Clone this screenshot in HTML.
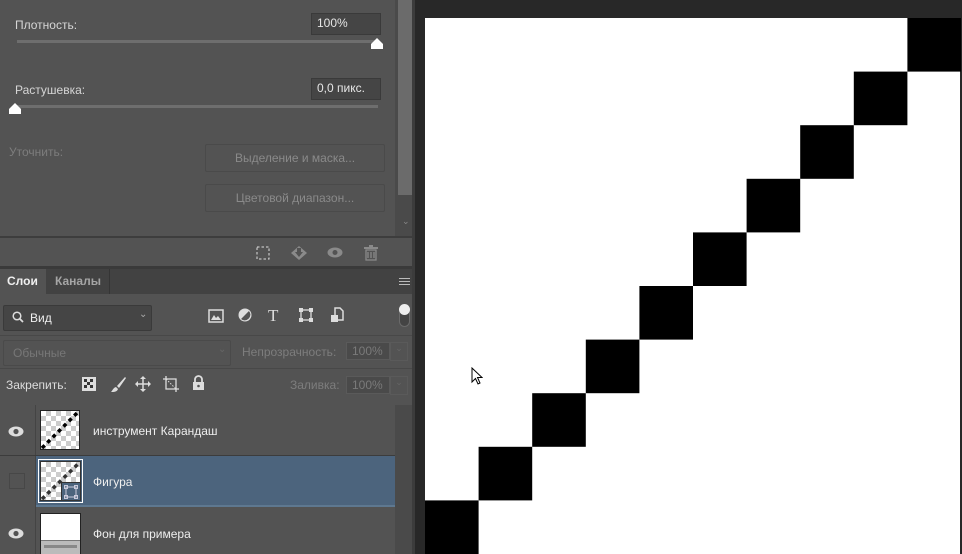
<!DOCTYPE html>
<html><head><meta charset="utf-8"><style>
*{margin:0;padding:0;box-sizing:border-box}
body{width:962px;height:554px;overflow:hidden;background:#282828;position:relative;font-family:"Liberation Sans","DejaVu Sans",sans-serif;font-size:12px;color:#d6d6d6}
.a{position:absolute}
.inp{position:absolute;background:#454545;border:1px solid #3a3a3a;color:#e6e6e6;font-size:12px;padding:2px 5px}
.btn{position:absolute;border:1px solid #4a4a4a;border-radius:2px;color:#8a8a8a;text-align:center;font-size:12px;line-height:27px}
.dis{color:#7d7d7d}
.box{position:absolute;background:#4a4a4a;border:1px solid #5a5a5a;color:#7a7a7a;font-size:12px;padding:1px 5px}
.chk{background-image:linear-gradient(45deg,#ccc 25%,transparent 25%,transparent 75%,#ccc 75%),linear-gradient(45deg,#ccc 25%,transparent 25%,transparent 75%,#ccc 75%);background-size:10px 10px;background-position:0 0,5px 5px;background-color:#fff}
</style></head><body>
<div class="a" style="left:0;top:0;width:415px;height:554px;background:#535353"></div>
<!-- top properties -->
<div class="a" style="left:15px;top:18px">Плотность:</div>
<div class="inp" style="left:311px;top:13px;width:70px;height:22px">100%</div>
<div class="a" style="left:17px;top:40px;width:361px;height:3px;background:#6e6e6e"></div>
<svg class="a" style="left:370px;top:37px" width="14" height="13"><path d="M7 1 L13 7 L13 12 L1 12 L1 7 Z" fill="#fff"/></svg>
<div class="a" style="left:15px;top:83px">Растушевка:</div>
<div class="inp" style="left:311px;top:78px;width:70px;height:22px">0,0 пикс.</div>
<div class="a" style="left:17px;top:105px;width:361px;height:3px;background:#6e6e6e"></div>
<svg class="a" style="left:8px;top:102px" width="14" height="13"><path d="M7 1 L13 7 L13 12 L1 12 L1 7 Z" fill="#fff"/></svg>
<div class="a dis" style="left:9px;top:145px">Уточнить:</div>
<div class="btn" style="left:205px;top:144px;width:180px;height:28px">Выделение и маска...</div>
<div class="btn" style="left:205px;top:184px;width:180px;height:28px">Цветовой диапазон...</div>
<!-- scrollbar -->
<div class="a" style="left:395px;top:0;width:17px;height:236px;background:#4a4a4a"></div>
<div class="a" style="left:398px;top:0;width:14px;height:195px;background:#6b6b6b"></div>
<div class="a" style="left:402px;top:216px;color:#888;font-size:9px">⌄</div>
<div class="a" style="left:412px;top:0;width:3px;height:554px;background:#3c3c3c"></div>
<div class="a" style="left:0;top:236px;width:412px;height:2px;background:#3d3d3d"></div>
<!-- bottom icons -->
<svg class="a" style="left:256px;top:246px" width="14" height="14"><rect x="1" y="1" width="12" height="12" fill="none" stroke="#ddd" stroke-dasharray="2.5 2"/></svg>
<svg class="a" style="left:290px;top:245px" width="18" height="16"><path d="M9 1 L17 8 L9 15 L1 8Z" fill="#8a8a8a"/><path d="M7 3 L11 3 L11 7 L13 7 L9 12 L5 7 L7 7Z" fill="#535353"/></svg>
<svg class="a" style="left:327px;top:247px" width="16" height="11"><ellipse cx="8" cy="5.5" rx="7.5" ry="5" fill="#8a8a8a"/><circle cx="8" cy="5.5" r="2.5" fill="#535353"/></svg>
<svg class="a" style="left:364px;top:245px" width="14" height="16"><rect x="0" y="2" width="14" height="2" fill="#8a8a8a"/><rect x="5" y="0" width="4" height="2" fill="#8a8a8a"/><path d="M2 5 H12 V15 H2Z M4 7 V13 M7 7 V13 M10 7 V13" fill="none" stroke="#8a8a8a" stroke-width="1.3"/></svg>
<div class="a" style="left:0;top:266px;width:412px;height:3px;background:#3a3a3a"></div>
<!-- tabs -->
<div class="a" style="left:0;top:269px;width:412px;height:25px;background:#424242"></div>
<div class="a" style="left:0;top:269px;width:46px;height:25px;background:#535353"></div>
<div class="a" style="left:7px;top:274px;font-weight:bold;color:#f0f0f0;font-size:12px">Слои</div>
<div class="a" style="left:46px;top:269px;width:64px;height:25px;border-right:1px solid #353535"></div>
<div class="a" style="left:55px;top:274px;font-weight:bold;color:#a5a5a5;font-size:12px">Каналы</div>
<div class="a" style="left:399px;top:278px;width:11px;height:7px;border-top:1px solid #bbb;border-bottom:1px solid #bbb"><div style="margin-top:2px;border-top:1px solid #bbb"></div></div>
<!-- filter -->
<div class="a" style="left:3px;top:305px;width:149px;height:26px;background:#454545;border:1px solid #3a3a3a;border-radius:2px"></div>
<svg class="a" style="left:12px;top:311px" width="12" height="12"><circle cx="5" cy="5" r="3.8" fill="none" stroke="#ddd" stroke-width="1.5"/><path d="M8 8 L11 11" stroke="#ddd" stroke-width="1.8"/></svg>
<div class="a" style="left:30px;top:311px;color:#eee">Вид</div>
<div class="a" style="left:139px;top:309px;color:#aaa;font-size:10px">⌄</div>
<svg class="a" style="left:208px;top:309px" width="16" height="14"><rect x="1" y="1" width="14" height="12" fill="none" stroke="#ddd" stroke-width="1.5"/><path d="M3 11 L6 6 L8 9 L10 7 L13 11Z" fill="#ddd"/></svg>
<svg class="a" style="left:238px;top:308px" width="14" height="14"><circle cx="7" cy="7" r="6" fill="#ddd"/><path d="M11.2 2.8 A6 6 0 0 1 2.8 11.2Z" fill="#535353"/><circle cx="7" cy="7" r="6" fill="none" stroke="#ddd"/></svg>
<div class="a" style="left:268px;top:306px;font-family:'Liberation Serif',serif;font-size:17px;color:#ddd">T</div>
<svg class="a" style="left:298px;top:307px" width="16" height="16"><rect x="3" y="3" width="10" height="10" fill="none" stroke="#ddd" stroke-width="1.3"/><rect x="1" y="1" width="4" height="4" fill="#ddd"/><rect x="11" y="1" width="4" height="4" fill="#ddd"/><rect x="1" y="11" width="4" height="4" fill="#ddd"/><rect x="11" y="11" width="4" height="4" fill="#ddd"/></svg>
<svg class="a" style="left:330px;top:307px" width="14" height="16"><path d="M5 1 H10 L13 4 V13 H5Z" fill="none" stroke="#ddd" stroke-width="1.5"/><rect x="1" y="8" width="7" height="7" fill="#ddd"/></svg>
<div class="a" style="left:399px;top:305px;width:11px;height:22px;border:1px solid #6a6a6a;border-radius:6px;background:#444"></div>
<div class="a" style="left:399px;top:304px;width:11px;height:11px;border-radius:50%;background:#eee"></div>
<div class="a" style="left:0;top:335px;width:412px;height:1px;background:#484848"></div>
<!-- blend -->
<div class="a" style="left:3px;top:340px;width:228px;height:26px;border:1px solid #4a4a4a;border-radius:2px"></div>
<div class="a dis" style="left:13px;top:346px;color:#777">Обычные</div>
<div class="a" style="left:218px;top:344px;color:#666;font-size:10px">⌄</div>
<div class="a dis" style="left:242px;top:345px">Непрозрачность:</div>
<div class="box" style="left:346px;top:342px;width:44px;height:18px">100%</div>
<div class="a" style="left:390px;top:342px;width:18px;height:19px;border:1px solid #5a5a5a;color:#666;font-size:9px;text-align:center">⌄</div>
<div class="a" style="left:0;top:368px;width:412px;height:1px;background:#484848"></div>
<!-- lock -->
<div class="a" style="left:6px;top:378px;color:#ddd">Закрепить:</div>
<svg class="a" style="left:82px;top:377px" width="14" height="14"><rect width="14" height="14" fill="#ddd"/><rect x="2" y="2" width="3" height="3" fill="#333"/><rect x="8" y="2" width="3" height="3" fill="#333"/><rect x="5" y="5" width="3" height="3" fill="#333"/><rect x="2" y="8" width="3" height="3" fill="#333"/><rect x="8" y="8" width="3" height="3" fill="#333"/></svg>
<svg class="a" style="left:110px;top:376px" width="16" height="17"><path d="M15 1 L7 10 L9 12 L16 2Z M6 11 L8 13 C7 16 4 16 1 16 C3 14 3 12 6 11Z" fill="#ddd"/></svg>
<svg class="a" style="left:135px;top:376px" width="16" height="16"><path d="M8 1 V15 M1 8 H15" stroke="#ddd" stroke-width="1.5"/><path d="M8 0 L11 3 H5Z M8 16 L5 13 H11Z M0 8 L3 5 V11Z M16 8 L13 11 V5Z" fill="#ddd"/></svg>
<svg class="a" style="left:163px;top:376px" width="16" height="16"><path d="M3 0 V13 H16 M0 3 H13 V16" fill="none" stroke="#ddd" stroke-width="1.3"/><path d="M3 3 L13 13" stroke="#ddd" stroke-dasharray="1.5 1.5"/></svg>
<svg class="a" style="left:192px;top:375px" width="13" height="16"><path d="M3 7 V4.5 A3.5 3.5 0 0 1 10 4.5 V7" fill="none" stroke="#ddd" stroke-width="1.8"/><rect x="1" y="7" width="11" height="8" fill="#ddd"/><circle cx="6.5" cy="11" r="1.3" fill="#535353"/></svg>
<div class="a dis" style="left:290px;top:378px">Заливка:</div>
<div class="box" style="left:346px;top:376px;width:44px;height:18px">100%</div>
<div class="a" style="left:390px;top:376px;width:18px;height:19px;border:1px solid #5a5a5a;color:#666;font-size:9px;text-align:center">⌄</div>
<!-- layers -->
<div class="a" style="left:395px;top:405px;width:17px;height:149px;background:#4a4a4a"></div>
<div class="a" style="left:35px;top:405px;width:1px;height:149px;background:#444"></div>
<div class="a" style="left:0;top:455px;width:395px;height:1px;background:#3c3c3c"></div>
<div class="a" style="left:36px;top:456px;width:359px;height:49px;background:#4c647d"></div>
<div class="a" style="left:36px;top:505px;width:359px;height:2px;background:#5e7890"></div>
<svg class="a" style="left:8px;top:426px" width="16" height="11"><ellipse cx="8" cy="5.5" rx="7.5" ry="5" fill="#ddd"/><circle cx="8" cy="5.5" r="2.6" fill="#535353"/></svg>
<svg class="a" style="left:8px;top:528px" width="16" height="11"><ellipse cx="8" cy="5.5" rx="7.5" ry="5" fill="#ddd"/><circle cx="8" cy="5.5" r="2.6" fill="#535353"/></svg>
<div class="a" style="left:9px;top:473px;width:16px;height:16px;border:1px solid #474747"></div>
<!-- thumb 1 -->
<div class="a chk" style="left:40px;top:410px;width:40px;height:40px;border:1px solid #222"></div>
<svg class="a" style="left:41px;top:411px" width="38" height="38"><path d="M1 37 L37 1" stroke="#000" stroke-width="3.5" stroke-dasharray="3.8 3.8"/></svg>
<div class="a" style="left:93px;top:424px;color:#eee">инструмент Карандаш</div>
<!-- thumb 2 -->
<div class="a" style="left:38px;top:459px;width:45px;height:44px;border:1px solid #fff"></div>
<div class="a chk" style="left:40px;top:461px;width:41px;height:40px;border:1px solid #333"></div>
<svg class="a" style="left:41px;top:462px" width="39" height="38"><path d="M1 37 L38 1" stroke="#333" stroke-width="3.5" stroke-dasharray="3.8 3.8"/></svg>
<div class="a" style="left:61px;top:482px;width:20px;height:19px;background:#4c647d;border:1px solid #333"></div>
<svg class="a" style="left:63px;top:484px" width="16" height="16"><rect x="3" y="3" width="10" height="10" fill="none" stroke="#ccd" stroke-width="1"/><rect x="1.5" y="1.5" width="3" height="3" fill="none" stroke="#ccd"/><rect x="11.5" y="1.5" width="3" height="3" fill="none" stroke="#ccd"/><rect x="1.5" y="11.5" width="3" height="3" fill="none" stroke="#ccd"/><rect x="11.5" y="11.5" width="3" height="3" fill="none" stroke="#ccd"/></svg>
<div class="a" style="left:93px;top:475px;color:#eee">Фигура</div>
<!-- thumb 3 -->
<div class="a" style="left:40px;top:513px;width:41px;height:41px;background:#fff;border:1px solid #222"></div>
<div class="a" style="left:41px;top:540px;width:39px;height:14px;background:#bbb;border-top:1px solid #777"></div>
<div class="a" style="left:44px;top:545px;width:33px;height:3px;background:#888"></div>
<div class="a" style="left:93px;top:527px;color:#eee">Фон для примера</div>
<!-- canvas -->
<div class="a" style="left:425px;top:18px;width:535px;height:536px;background:#fff"></div>
<svg class="a" style="left:425px;top:18px" width="536" height="536">
<g fill="#000">
<rect x="0" y="482.4" width="53.6" height="53.6"/>
<rect x="53.6" y="428.8" width="53.6" height="53.6"/>
<rect x="107.2" y="375.2" width="53.6" height="53.6"/>
<rect x="160.8" y="321.6" width="53.6" height="53.6"/>
<rect x="214.4" y="268" width="53.6" height="53.6"/>
<rect x="268" y="214.4" width="53.6" height="53.6"/>
<rect x="321.6" y="160.8" width="53.6" height="53.6"/>
<rect x="375.2" y="107.2" width="53.6" height="53.6"/>
<rect x="428.8" y="53.6" width="53.6" height="53.6"/>
<rect x="482.4" y="0" width="53.6" height="53.6"/>
</g></svg>
<svg class="a" style="left:471px;top:367px" width="12" height="20"><path d="M1 1 V15 L4.5 11.5 L7 17 L9 16 L6.5 10.5 L11 10.5Z" fill="#fff" stroke="#000"/></svg>
</body></html>
